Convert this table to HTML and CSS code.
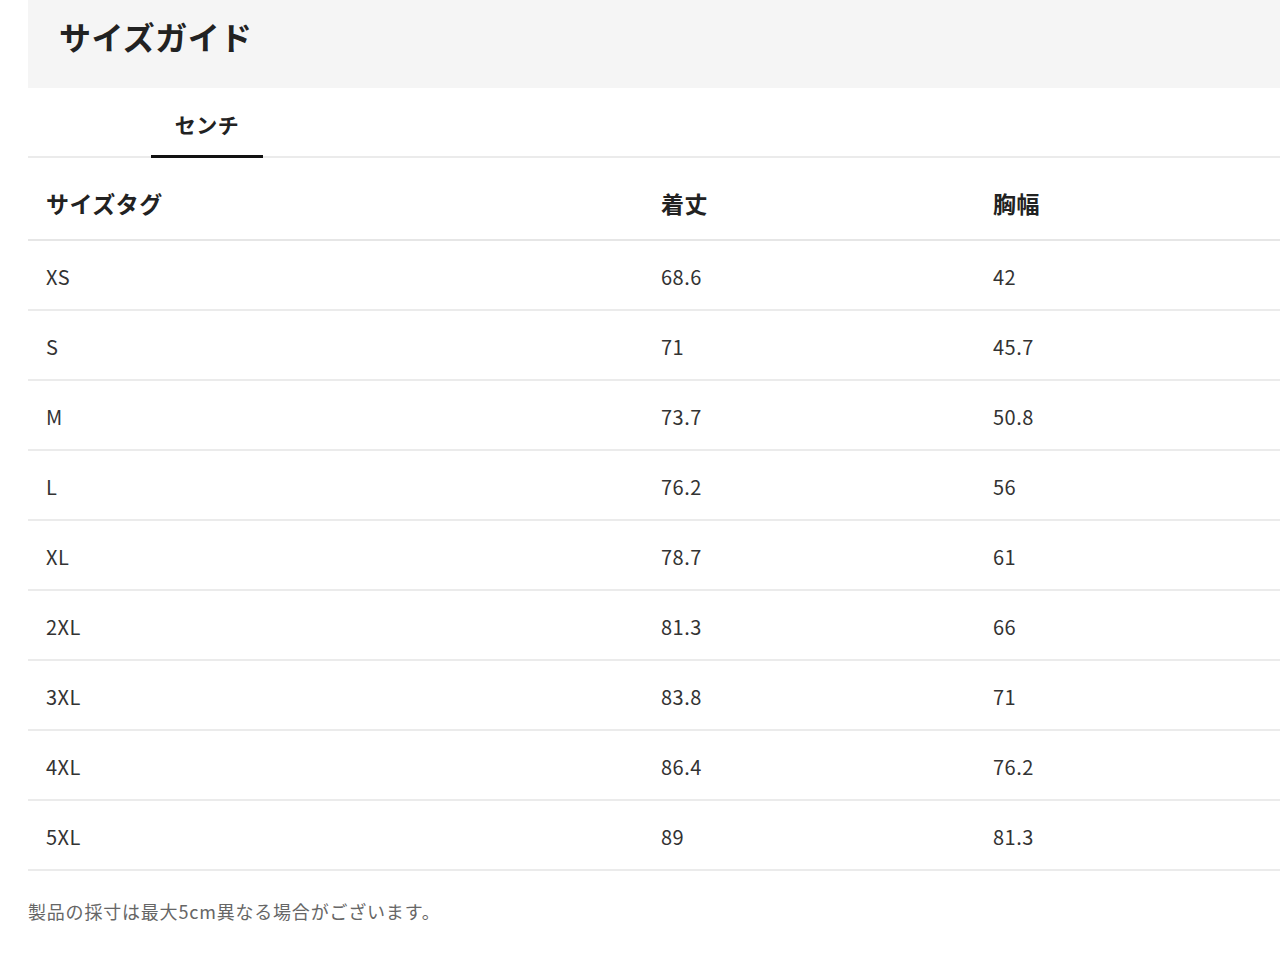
FILE: index.html
```html
<!DOCTYPE html>
<html lang="ja">
<head>
<meta charset="utf-8">
<title>サイズガイド</title>
<link rel="stylesheet" href="styles.css">
</head>
<body>
<div class="page">
  <header class="guide-header">
    <h1 class="guide-title">サイズガイド</h1>
  </header>
  <nav class="tabs">
    <div class="tab tab-active">センチ</div>
  </nav>
  <table class="size-table">
    <colgroup>
      <col class="c1">
      <col class="c2">
      <col class="c3">
    </colgroup>
    <thead>
      <tr><th>サイズタグ</th><th>着丈</th><th>胸幅</th></tr>
    </thead>
    <tbody>
      <tr><td>XS</td><td>68.6</td><td>42</td></tr>
      <tr><td>S</td><td>71</td><td>45.7</td></tr>
      <tr><td>M</td><td>73.7</td><td>50.8</td></tr>
      <tr><td>L</td><td>76.2</td><td>56</td></tr>
      <tr><td>XL</td><td>78.7</td><td>61</td></tr>
      <tr><td>2XL</td><td>81.3</td><td>66</td></tr>
      <tr><td>3XL</td><td>83.8</td><td>71</td></tr>
      <tr><td>4XL</td><td>86.4</td><td>76.2</td></tr>
      <tr><td>5XL</td><td>89</td><td>81.3</td></tr>
    </tbody>
  </table>
  <p class="note">製品の採寸は最大5cm異なる場合がございます。</p>
</div>
</body>
</html>
```

FILE: styles.css
```css
html, body {
  margin: 0;
  padding: 0;
  background: #ffffff;
}
body {
  font-family: "Noto Sans CJK JP", "Noto Sans", sans-serif;
  color: #333333;
}
.page {
  padding-left: 28px;
}
.guide-header {
  background: #f5f5f5;
  height: 88px;
  display: flex;
  align-items: center;
  padding-left: 31px;
  box-sizing: border-box;
}
.guide-title {
  margin: 0;
  font-size: 32px;
  font-weight: 700;
  color: #222222;
  line-height: 1;
  padding-bottom: 16px;
  letter-spacing: 0.4px;
}
.tabs {
  display: flex;
  height: 70px;
  box-sizing: border-box;
  border-bottom: 2px solid #ebebeb;
  padding-left: 123px;
}
.tab {
  width: 112px;
  display: flex;
  align-items: center;
  justify-content: center;
  font-size: 21px;
  font-weight: 700;
  color: #222222;
  padding-top: 4px;
  letter-spacing: 0.5px;
  box-sizing: border-box;
}
.tab-active {
  border-bottom: 3px solid #111111;
  margin-bottom: -2px;
}
.size-table {
  width: 100%;
  border-collapse: collapse;
  table-layout: fixed;
}
.c1 { width: 615px; }
.c2 { width: 332px; }
.size-table th,
.size-table td {
  text-align: left;
  padding: 0 0 0 18px;
}
.size-table th {
  height: 73px;
  padding-top: 8px;
  font-size: 23px;
  font-weight: 700;
  color: #222222;
  border-bottom: 2px solid #e6e6e6;
  letter-spacing: 0.5px;
}
.size-table td {
  height: 66px;
  padding-top: 2px;
  font-size: 20px;
  letter-spacing: 0.5px;
  color: #333333;
  border-bottom: 2px solid #ebebeb;
}
.note {
  margin: 27px 0 0;
  font-size: 18px;
  letter-spacing: 0.8px;
  color: #666666;
  line-height: 26px;
}
```
